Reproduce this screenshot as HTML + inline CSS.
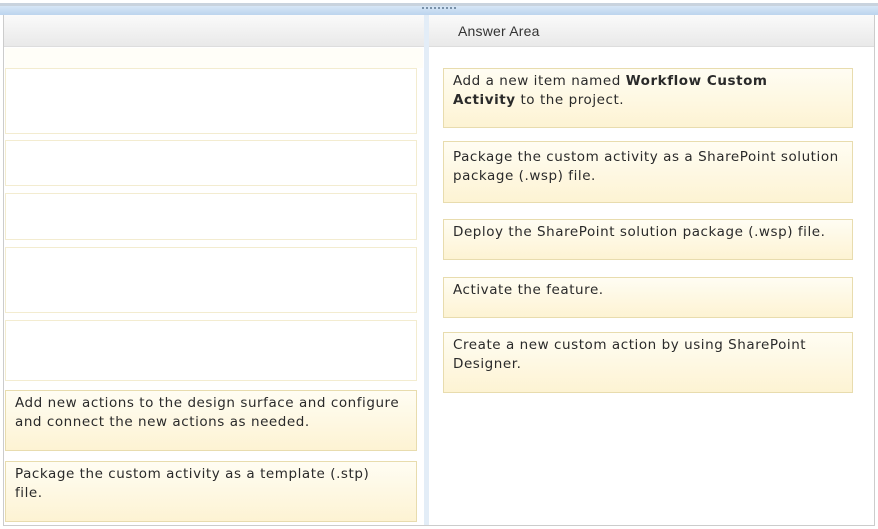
<!DOCTYPE html>
<html><head><style>
body{margin:0;width:878px;height:529px;background:#fff;position:relative;overflow:hidden;font-family:"DejaVu Sans","Liberation Sans",sans-serif;font-size:13.5px;letter-spacing:0.55px;color:#2a2a2a;line-height:19px}
.a{position:absolute;box-sizing:border-box}
.e{border:1px solid #f3ecd0;background:#fff}
.f{border:1px solid #e8dcae;background:linear-gradient(#fffdf3,#fdf3d3);padding:4px 9px}
</style></head><body>
<div class="a" style="left:0;top:3px;width:878px;height:3px;background:#c9d3de"></div>
<div class="a" style="left:0;top:6px;width:878px;height:9px;background:linear-gradient(#d6e6f6,#bcd4ee)"></div>
<div class="a" style="left:422px;top:7px;width:34px;height:4px;border-top:2px dotted #7890a8"></div>
<div class="a" style="left:3px;top:15px;width:872px;height:32px;background:linear-gradient(#fafafa,#e9e9e9);border-bottom:1px solid #ddd"></div>
<div class="a" style="left:458px;top:22px;font-family:'Liberation Sans',sans-serif;font-size:14px;letter-spacing:0.2px;color:#333">Answer Area</div>
<div class="a" style="left:3px;top:15px;width:1px;height:511px;background:#ccc"></div>
<div class="a" style="left:874px;top:15px;width:1px;height:511px;background:#ccc"></div>
<div class="a" style="left:3px;top:525px;width:872px;height:1px;background:#ccc"></div>
<div class="a" style="left:424px;top:15px;width:5px;height:510px;background:#e3edf7"></div>
<div class="a" style="left:5px;top:48px;width:418px;height:20px;background:#fffef8"></div>

<div class="a e" style="left:5px;top:68px;width:412px;height:66px"></div>
<div class="a e" style="left:5px;top:140px;width:412px;height:46px"></div>
<div class="a e" style="left:5px;top:193px;width:412px;height:47px"></div>
<div class="a e" style="left:5px;top:247px;width:412px;height:66px"></div>
<div class="a e" style="left:5px;top:320px;width:412px;height:61px"></div>
<div class="a f" style="left:5px;top:390px;width:412px;height:61px;padding-top:3px">Add new actions to the design surface and configure and connect the new actions as needed.</div>
<div class="a f" style="left:5px;top:461px;width:412px;height:61px;padding-top:3px">Package the custom activity as a template (.stp)<br>file.</div>

<div class="a f" style="left:443px;top:68px;width:410px;height:60px;padding-top:3px">Add a new item named <b>Workflow Custom</b><br><b>Activity</b> to the project.</div>
<div class="a f" style="left:443px;top:141px;width:410px;height:62px;padding-top:6px">Package the custom activity as a SharePoint solution package (.wsp) file.</div>
<div class="a f" style="left:443px;top:219px;width:410px;height:41px;padding-top:3px">Deploy the SharePoint solution package (.wsp) file.</div>
<div class="a f" style="left:443px;top:277px;width:410px;height:41px;padding-top:3px">Activate the feature.</div>
<div class="a f" style="left:443px;top:332px;width:410px;height:61px;padding-top:3px">Create a new custom action by using SharePoint Designer.</div>
</body></html>
